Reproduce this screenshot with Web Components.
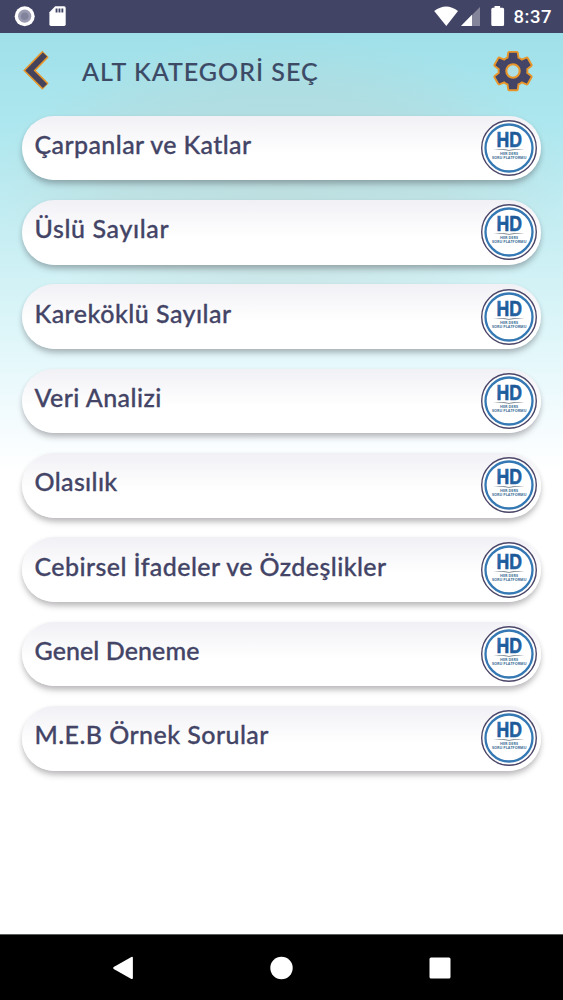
<!DOCTYPE html>
<html lang="tr">
<head>
<meta charset="utf-8">
<title>Alt Kategori Seç</title>
<style>
  body {
    margin: 0;
    font-family: Lato, "Noto Sans", sans-serif;
    color: #434466;
  }
</style>
</head>
<body>
<quiz-app></quiz-app>

<script>
class StatusBar extends HTMLElement {
  constructor() {
    super()
    this.attachShadow({ mode: "open" })
    this.shadowRoot.innerHTML = `
      <style>
        :host {
          display: flex;
          align-items: center;
          height: 33px;
          flex: none;
          background: #424466;
          color: #fff;
          font: 500 18.5px/33px Roboto, sans-serif;
        }
        svg { display: block; fill: #fff; }
        .right { margin-left: auto; }
        .time { margin-left: 3.5px; width: 49.5px; padding-top: 1px; letter-spacing: 0.5px; }
      </style>
      <svg width="80" height="33">
        <circle cx="24.7" cy="16.2" r="10"/>
        <circle cx="24.7" cy="16.2" r="6.6" fill="#9a9bb0"/>
        <circle cx="24.7" cy="16.2" r="3.8" fill="#81839d"/>
        <path d="M55.2 6.3h8.9q1.6 0 1.6 1.6v16.4q0 1.6-1.6 1.6H51q-1.6 0-1.6-1.6V12.2z"/>
        <path d="M55.6 8.5h1.9v4h-1.9zM58.5 8.5h1.9v4h-1.9zM61.4 8.5h1.9v4h-1.9z" fill="#424466"/>
      </svg>
      <svg class="right" width="80" height="33" viewBox="430 0 80 33">
        <path d="M434.2 11q11.9-9 23.8 0L446.3 26z"/>
        <path d="M480 7v19h-19z" opacity=".35"/>
        <path d="M472 14.8V26h-11z"/>
        <path d="M494.5 6h5.6v1.7h2.5q1.5 0 1.5 1.5v15.3q0 1.5-1.5 1.5h-9.8q-1.5 0-1.5-1.5V9.2q0-1.5 1.5-1.5h1.7z"/>
      </svg>
      <span class="time">8:37</span>
    `
  }
}
customElements.define("status-bar", StatusBar)

class AppHeader extends HTMLElement {
  constructor() {
    super()
    this.attachShadow({ mode: "open" })
    this.shadowRoot.innerHTML = `
      <style>
        :host {
          display: flex;
          align-items: center;
          height: 76px;
          flex: none;
          padding: 0 27px 0 20px;
          box-sizing: border-box;
        }
        h1 {
          margin: 0 auto 0 29px;
          font-size: 25px;
          font-weight: 500;
          line-height: 30px;
          letter-spacing: 1px;
          color: #3c4a66;
          -webkit-text-stroke: 0.15px currentColor;
          white-space: nowrap;
        }
        svg { display: block; flex: none; }
      </style>
      <svg width="33" height="46" viewBox="0 0 33 46" fill="none">
        <path d="M25.5 6 9.5 22.500l16 16" stroke="#e8962a" stroke-width="9"/>
        <path d="M25 6.500 9.500 22.500l15.500 15.500" stroke="#45425c" stroke-width="6"/>
      </svg>
      <h1><slot></slot></h1>
      <svg width="46" height="46" viewBox="0 0 24 24">
        <path fill="#434466" stroke="#e8962a" stroke-width="1" d="M19.43 12.98c.04-.32.07-.64.07-.98s-.03-.66-.07-.98l2.11-1.65c.19-.15.24-.42.12-.64l-2-3.46c-.12-.22-.39-.3-.61-.22l-2.49 1c-.52-.4-1.08-.73-1.69-.98l-.38-2.65C14.46 2.18 14.25 2 14 2h-4c-.25 0-.46.18-.49.42l-.38 2.65c-.61.25-1.17.59-1.69.98l-2.49-1c-.23-.09-.49 0-.61.22l-2 3.46c-.13.22-.07.49.12.64l2.11 1.65c-.04.32-.07.65-.07.98s.03.66.07.98l-2.11 1.65c-.19.15-.24.42-.12.64l2 3.46c.12.22.39.3.61.22l2.49-1c.52.4 1.08.73 1.69.98l.38 2.65c.03.24.24.42.49.42h4c.25 0 .46-.18.49-.42l.38-2.65c.61-.25 1.17-.59 1.69-.98l2.49 1c.23.09.49 0 .61-.22l2-3.46c.12-.22.07-.49-.12-.64l-2.11-1.65z"/>
        <circle cx="12" cy="12" r="3.500" fill="#b0dfe3" stroke="#e8962a" stroke-width="1.100"/>
      </svg>
    `
  }
}
customElements.define("app-header", AppHeader)

class BrandBadge extends HTMLElement {
  constructor() {
    super()
    this.attachShadow({ mode: "open" })
    this.shadowRoot.innerHTML = `
      <style>
        :host { display: block; width: 58px; height: 58px; }
        svg { display: block; font-family: "Open Sans", sans-serif; font-weight: 700; }
        .mark { font-family: "Liberation Sans", sans-serif; font-size: 22.5px; }
      </style>
      <svg width="58" height="58" viewBox="0 0 58 58">
        <defs>
          <linearGradient id="hd" x1="0" x2="1" y2="1">
            <stop offset="0" stop-color="#2f7fc0"/>
            <stop offset=".5" stop-color="#1c5594"/>
            <stop offset="1" stop-color="#2b6fae"/>
          </linearGradient>
        </defs>
        <circle cx="29" cy="29" r="27.300" fill="#fff" stroke="#4c4769" stroke-width="1.400"/>
        <circle cx="29" cy="29" r="23.500" fill="none" stroke="#3478b4" stroke-width="2.300"/>
        <text class="mark" x="16.500" y="27.800" textLength="25.500" lengthAdjust="spacingAndGlyphs" fill="url(#hd)" stroke="url(#hd)" stroke-width=".6">HD</text>
        <path d="M13.500 30.300q9-1 15.500.7 6.500-1.700 15.500-.7-9 0-15.500 1.500-6.500-1.500-15.500-1.500z" fill="#6c7782"/>
        <text x="20" y="36.300" font-size="4" textLength="18" lengthAdjust="spacingAndGlyphs" fill="#3f7198">HER DERS</text>
        <text x="12" y="40.400" font-size="4" textLength="34.500" lengthAdjust="spacingAndGlyphs" fill="#3f7198">SORU PLATFORMU</text>
      </svg>
    `
  }
}
customElements.define("brand-badge", BrandBadge)

class CategoryCard extends HTMLElement {
  constructor() {
    super()
    this.attachShadow({ mode: "open" })
    this.shadowRoot.innerHTML = `
      <style>
        :host {
          display: flex;
          justify-content: space-between;
          height: 64.6px;
          box-sizing: border-box;
          padding: 3.3px 3.3px 0 12.5px;
          border-radius: 33px;
          background: linear-gradient(#f1f0f5, #fff 58%);
          box-shadow: 0 5px 6px -1px rgba(40, 30, 40, 0.25), 0 2px 5px rgba(40, 30, 40, 0.1);
        }
        .name {
          padding-top: 10px;
          font-size: 25px;
          font-weight: 500;
          line-height: 30px;
          letter-spacing: var(--tracking, 0.4px);
          -webkit-text-stroke: 0.3px currentColor;
          white-space: nowrap;
        }
      </style>
      <div class="name"><slot></slot></div>
      <brand-badge></brand-badge>
    `
  }
}
customElements.define("category-card", CategoryCard)

class NavBar extends HTMLElement {
  constructor() {
    super()
    this.attachShadow({ mode: "open" })
    this.shadowRoot.innerHTML = `
      <style>
        :host {
          display: flex;
          justify-content: space-between;
          align-items: center;
          height: 66px;
          flex: none;
          box-sizing: border-box;
          padding: 0 112px;
          border-top: 1px solid #5a5f5c;
          background: #000;
        }
        svg { display: block; fill: #fff; }
      </style>
      <svg width="22" height="24"><path d="M1.7 10.9 19.4.9q1.5-.5 1.5 1v20q0 1.5-1.5 1L1.7 12.9q-1.2-1 0-2z"/></svg>
      <svg width="24" height="24"><circle cx="11.500" cy="12" r="11.200"/></svg>
      <svg width="22" height="24"><rect x=".5" y="1.500" width="21" height="21" rx="1.500"/></svg>
    `
  }
}
customElements.define("nav-bar", NavBar)

const categories = [
  { name: "Çarpanlar ve Katlar", tracking: 0.4 },
  { name: "Üslü Sayılar", tracking: 0.62 },
  { name: "Kareköklü Sayılar", tracking: 0.49 },
  { name: "Veri Analizi", tracking: 0.43 },
  { name: "Olasılık", tracking: 0.36 },
  { name: "Cebirsel İfadeler ve Özdeşlikler", tracking: 0.42 },
  { name: "Genel Deneme", tracking: 0.08 },
  { name: "M.E.B Örnek Sorular", tracking: 0.44 },
]

class QuizApp extends HTMLElement {
  constructor() {
    super()
    this.attachShadow({ mode: "open" })
  }

  connectedCallback() {
    this.shadowRoot.innerHTML = `
      <style>
        :host {
          display: flex;
          flex-direction: column;
          height: 1000px;
          overflow: hidden;
        }
        main {
          flex: 1;
          display: flex;
          flex-direction: column;
          background:
            radial-gradient(ellipse 285px 150px at 50% 150px, rgba(190, 205, 200, 0.42), rgba(190, 205, 200, 0.3) 60%, transparent),
            linear-gradient(#a0e0e9, #abe6ee 80px, #c4edf2 190px, #def6f9 300px, #f2fbfe 380px, #fff 440px);
        }
        .list {
          display: grid;
          gap: 19.76px;
          padding: 6.7px 22px 0;
        }
      </style>
      <status-bar></status-bar>
      <main>
        <app-header>ALT KATEGORİ SEÇ</app-header>
        <div class="list">
          ${categories.map(c => `<category-card style="--tracking: ${c.tracking}px">${c.name}</category-card>`).join("")}
        </div>
      </main>
      <nav-bar></nav-bar>
    `
  }
}
customElements.define("quiz-app", QuizApp)
</script>
</body>
</html>
